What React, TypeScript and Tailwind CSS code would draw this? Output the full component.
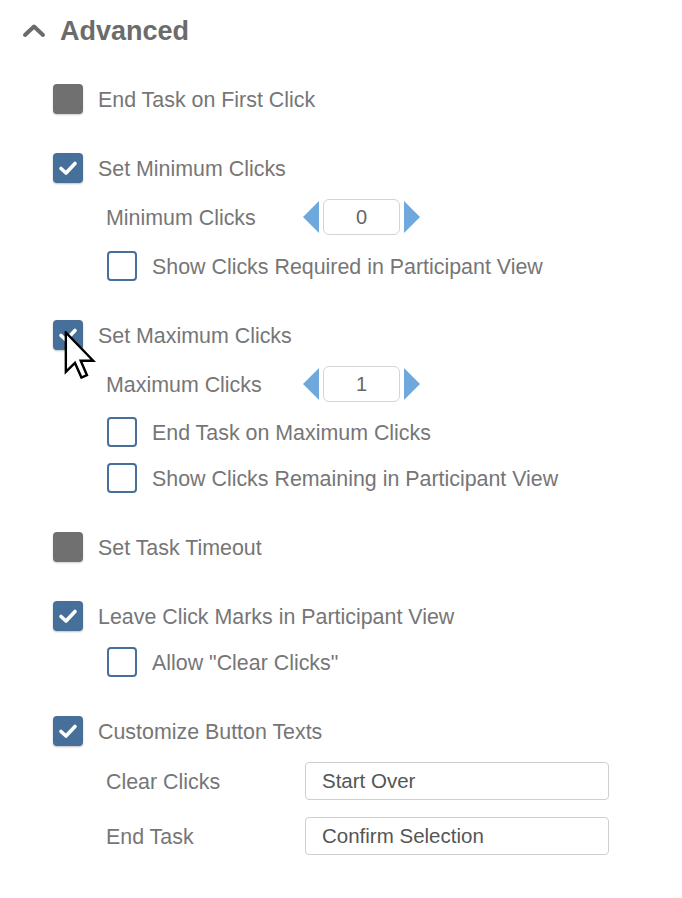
const font = { fontFamily: '"Liberation Sans", Arial, sans-serif' };

const CheckedBox = () => (
  <span className="flex h-[30px] w-[30px] shrink-0 items-center justify-center rounded-[4px] bg-[#46709a] shadow-[0_1px_2px_rgba(0,0,0,0.25)]">
    <svg width="20" height="16" viewBox="0 0 20 16">
      <path d="M3 8.5 L8 13 L17 3.5" fill="none" stroke="#fff" strokeWidth="3.6" strokeLinecap="round" strokeLinejoin="round" />
    </svg>
  </span>
);

const DisabledBox = () => (
  <span className="block h-[30px] w-[30px] shrink-0 rounded-[4px] bg-[#707070] shadow-[0_1px_2px_rgba(0,0,0,0.2)]" />
);

const EmptyBox = () => (
  <span className="block h-[30px] w-[30px] shrink-0 rounded-[4px] border-[2.5px] border-[#46709a] bg-white" />
);

const Row = ({ box, label, className }: { box: 'on' | 'off' | 'empty'; label: string; className: string }) => (
  <div className={`flex h-[30px] items-center gap-[15px] ${className}`}>
    {box === 'on' && <CheckedBox />}
    {box === 'off' && <DisabledBox />}
    {box === 'empty' && <EmptyBox />}
    <span className="pt-[4px] text-[21.4px] leading-none text-[#767676]">{label}</span>
  </div>
);

const Stepper = ({ label, value, className }: { label: string; value: string; className: string }) => (
  <div className={`ml-[106px] flex h-[36px] items-center ${className}`}>
    <span className="w-[197px] pt-[4px] text-[21.4px] leading-none text-[#767676]">{label}</span>
    <span className="h-0 w-0 border-y-[16px] border-r-[16px] border-y-transparent border-r-[#6fa8dc]" />
    <span className="mx-[4px] flex h-[36px] w-[77px] items-center justify-center rounded-[6px] border border-[#d4d4d4] bg-white text-[20px] text-[#666]">
      {value}
    </span>
    <span className="h-0 w-0 border-y-[16px] border-l-[16px] border-y-transparent border-l-[#6fa8dc]" />
  </div>
);

const TextField = ({ label, value, className }: { label: string; value: string; className: string }) => (
  <div className={`ml-[106px] flex h-[38px] items-center ${className}`}>
    <span className="w-[199px] pt-[4px] text-[21.4px] leading-none text-[#767676]">{label}</span>
    <span className="flex h-[38px] w-[304px] items-center rounded-[4px] border border-[#cfcfcf] bg-white px-[16px] text-[20.5px] text-[#555]">
      {value}
    </span>
  </div>
);

export default function App() {
  return (
    <div className="relative min-h-[898px] w-[682px] bg-white" style={font}>
      {/* Header */}
      <div className="ml-[22px] box-content flex h-[40px] items-center gap-[14px] pt-[10px]">
        <svg width="24" height="16" viewBox="0 0 24 16">
          <path d="M3 13 L12 4.5 L21 13" fill="none" stroke="#6b6b6b" strokeWidth="4" strokeLinecap="round" strokeLinejoin="round" />
        </svg>
        <span className="pt-[3px] text-[27px] font-bold leading-none text-[#6b6b6b]">Advanced</span>
      </div>

      <div className="ml-[53px] flex flex-col">
        <Row box="off" label="End Task on First Click" className="mt-[34px]" />
        <Row box="on" label="Set Minimum Clicks" className="mt-[39px]" />
      </div>
      <Stepper label="Minimum Clicks" value="0" className="mt-[16px]" />
      <div className="ml-[107px]">
        <Row box="empty" label="Show Clicks Required in Participant View" className="mt-[16px]" />
      </div>

      <div className="ml-[53px]">
        <Row box="on" label="Set Maximum Clicks" className="mt-[39px]" />
      </div>
      <Stepper label="Maximum Clicks" value="1" className="mt-[16px]" />
      <div className="ml-[107px] flex flex-col">
        <Row box="empty" label="End Task on Maximum Clicks" className="mt-[15px]" />
        <Row box="empty" label="Show Clicks Remaining in Participant View" className="mt-[16px]" />
      </div>

      <div className="ml-[53px] flex flex-col">
        <Row box="off" label="Set Task Timeout" className="mt-[39px]" />
        <Row box="on" label="Leave Click Marks in Participant View" className="mt-[39px]" />
      </div>
      <div className="ml-[107px]">
        <Row box="empty" label={'Allow "Clear Clicks"'} className="mt-[16px]" />
      </div>

      <div className="ml-[53px]">
        <Row box="on" label="Customize Button Texts" className="mt-[39px]" />
      </div>
      <TextField label="Clear Clicks" value="Start Over" className="mt-[16px]" />
      <TextField label="End Task" value="Confirm Selection" className="mt-[17px]" />

      {/* Mouse cursor */}
      <svg className="absolute left-[64px] top-[331px]" width="32" height="48" viewBox="0 0 13 20">
        <path d="M0.6 0.6 L0.6 17 L4.4 13.3 L7.1 19.4 L9.4 18.4 L6.8 12.4 L12 12.4 Z" fill="#fff" stroke="#000" strokeWidth="1" strokeLinejoin="miter" />
      </svg>
    </div>
  );
}
